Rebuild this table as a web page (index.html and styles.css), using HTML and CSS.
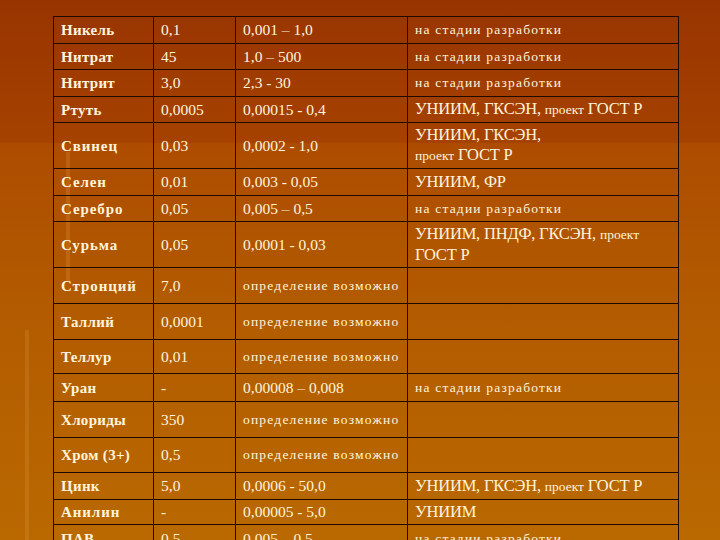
FILE: index.html
```html
<!DOCTYPE html>
<html lang="ru">
<head>
<meta charset="utf-8">
<title>Таблица</title>
<link rel="stylesheet" href="styles.css">
</head>
<body>
<div class="slide">
<table class="grid">
<colgroup><col class="c1"><col class="c2"><col class="c3"><col class="c4"></colgroup>
<tbody>
<tr class="h27"><td class="name">Никель</td><td>0,1</td><td>0,001 – 1,0</td><td class="st">на стадии разработки</td></tr>
<tr class="h26"><td class="name">Нитрат</td><td>45</td><td>1,0 – 500</td><td class="st">на стадии разработки</td></tr>
<tr class="h27"><td class="name">Нитрит</td><td>3,0</td><td>2,3 - 30</td><td class="st">на стадии разработки</td></tr>
<tr class="h26"><td class="name">Ртуть</td><td>0,0005</td><td>0,00015 - 0,4</td><td class="org">УНИИМ, ГКСЭН, <span class="sm">проект</span> ГОСТ Р</td></tr>
<tr class="h46"><td class="name sp">Свинец</td><td>0,03</td><td>0,0002 - 1,0</td><td class="org">УНИИМ, ГКСЭН,<br><span class="sm">проект</span> ГОСТ Р</td></tr>
<tr class="h27"><td class="name sp">Селен</td><td>0,01</td><td>0,003 - 0,05</td><td class="org">УНИИМ, ФР</td></tr>
<tr class="h26"><td class="name sp">Серебро</td><td>0,05</td><td>0,005 – 0,5</td><td class="st">на стадии разработки</td></tr>
<tr class="h46"><td class="name sp">Сурьма</td><td>0,05</td><td>0,0001 - 0,03</td><td class="org">УНИИМ, ПНДФ, ГКСЭН, <span class="sm">проект</span><br>ГОСТ Р</td></tr>
<tr class="h36"><td class="name sp">Стронций</td><td>7,0</td><td class="st">определение возможно</td><td></td></tr>
<tr class="h36"><td class="name">Таллий</td><td>0,0001</td><td class="st">определение возможно</td><td></td></tr>
<tr class="h34"><td class="name">Теллур</td><td>0,01</td><td class="st">определение возможно</td><td></td></tr>
<tr class="h28"><td class="name">Уран</td><td>-</td><td>0,00008 – 0,008</td><td class="st">на стадии разработки</td></tr>
<tr class="h36"><td class="name">Хлориды</td><td>350</td><td class="st">определение возможно</td><td></td></tr>
<tr class="h35"><td class="name">Хром (3+)</td><td>0,5</td><td class="st">определение возможно</td><td></td></tr>
<tr class="h27"><td class="name">Цинк</td><td>5,0</td><td>0,0006 - 50,0</td><td class="org">УНИИМ, ГКСЭН, <span class="sm">проект</span> ГОСТ Р</td></tr>
<tr class="h25"><td class="name sp">Анилин</td><td>-</td><td>0,00005 - 5,0</td><td class="org">УНИИМ</td></tr>
<tr class="h28"><td class="name">ПАВ</td><td>0,5</td><td>0,005 – 0,5</td><td class="st">на стадии разработки</td></tr>
</tbody>
</table>
</div>
</body>
</html>
```
FILE: styles.css
```css
html, body {
  margin: 0;
  padding: 0;
  width: 720px;
  height: 540px;
  overflow: hidden;
}
body {
  background-color: #a64400;
  background-image:
    linear-gradient(to right, rgba(255,190,110,0.16), rgba(255,190,110,0.16)),
    linear-gradient(to right, rgba(255,190,110,0.14), rgba(255,190,110,0.14)),
    linear-gradient(to bottom, #983400 0%, #a54200 26.4%, #ad4c00 26.6%, #b25a00 55%, #b96900 100%);
  background-repeat: no-repeat;
  background-size: 4px 130px, 4px 210px, 720px 540px;
  background-position: 66px 152px, 25px 330px, 0 0;
  font-family: "Liberation Serif", "Times New Roman", serif;
  color: #fff4dc;
}
.slide {
  padding: 16px 0 0 53px;
}
.grid {
  border-collapse: collapse;
  table-layout: fixed;
  width: 625px;
}
.c1 { width: 100px; }
.c2 { width: 82px; }
.c3 { width: 172px; }
.c4 { width: 271px; }
.grid td {
  border: 1px solid #1e0a00;
  padding: 0 4px 0 7px;
  vertical-align: middle;
  font-size: 15.5px;
  line-height: 18px;
  white-space: nowrap;
}
.grid td.name {
  font-size: 15px;
  font-weight: bold;
  letter-spacing: 0.3px;
}
.grid td.name.sp {
  letter-spacing: 0.9px;
}
.grid td.st {
  font-size: 13.5px;
  letter-spacing: 1.2px;
}
.grid td.org {
  font-size: 16.5px;
  line-height: 20px;
  letter-spacing: -0.2px;
}
.sm {
  font-size: 13.5px;
  letter-spacing: 0;
}
.h25 { height: 25px; }
.h26 { height: 26px; }
.h27 { height: 27px; }
.h28 { height: 28px; }
.h34 { height: 34px; }
.h35 { height: 35px; }
.h36 { height: 36px; }
.h46 { height: 46px; }
```
